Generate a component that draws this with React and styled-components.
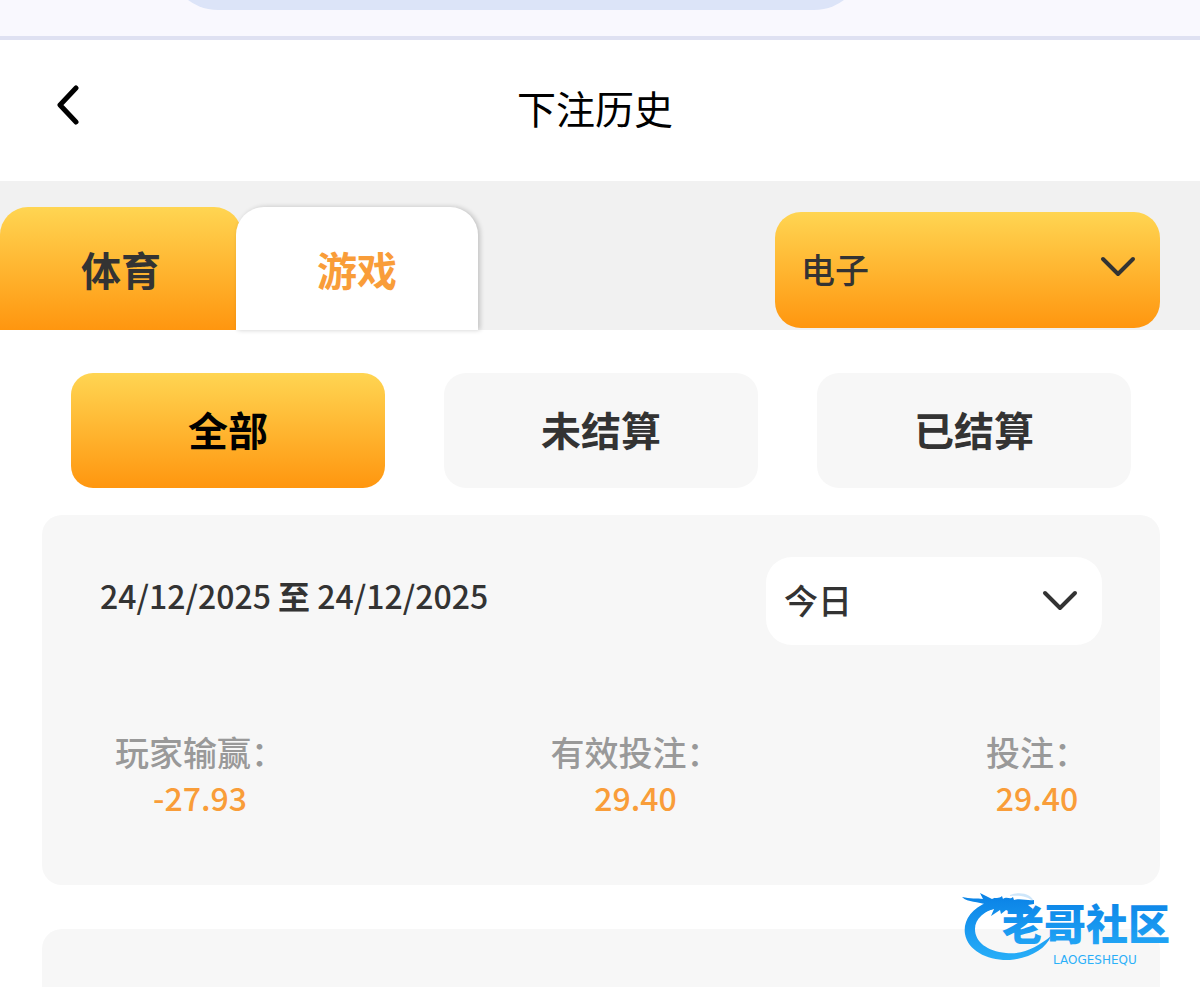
import React, { useState } from 'react'
import styled, { createGlobalStyle } from 'styled-components'


const filters = ['全部', '未结算', '已结算']

const stats = [
  { label: '玩家输赢：', value: '-27.93' },
  { label: '有效投注：', value: '29.40' },
  { label: '投注：', value: '29.40' },
]

const Chevron = () => (
  <ChevronIcon viewBox="0 0 36 22" aria-hidden="true">
    <path d="M3 3 L18 18 L33 3" />
  </ChevronIcon>
)

const BrandMark = () => (
  <Brand viewBox="0 0 224 80" role="img" aria-label="老哥社区 LAOGESHEQU">
    <defs>
      <linearGradient id="brandBlue" x1="0" y1="0" x2="0" y2="80" gradientUnits="userSpaceOnUse">
        <stop offset="0.1" stopColor="#0a82e6" />
        <stop offset="0.6" stopColor="#1c9df2" />
        <stop offset="1" stopColor="#2bb4fa" />
      </linearGradient>
    </defs>
    <g fill="url(#brandBlue)">
      <path d="M28 15 C10 22 3 35 5 47 C8 64 28 74 50 73 C70 71 86 62 91 49 C78 60 62 68 46 66 C27 64 15 55 15 42 C15 32 24 23 40 20 Z" />
      <path d="M2 10 C10 12 17 11 23 12 L20 6 L32 12 C35 10 39 12 42 9 L43 12 C47 9 50 13 53 10 L54 13 C60 11 68 14 74 13 L74 17 L68 18 L73 22 L72 25 L63 22 L60 24 L52 22 L55 27 L46 23 L41 27 L40 23 L31 29 L34 22 L24 25 L27 18 C18 14 8 16 2 10 Z" />
      <path d="M50 8 C60 4 72 7 74 15 C68 9 59 8 50 9 Z" opacity="0.2" />
      <BrandName x="42" y="53">老哥社区</BrandName>
      <BrandLatin x="93" y="77">LAOGESHEQU</BrandLatin>
    </g>
  </Brand>
)

const App = () => {
  const [active, setActive] = useState('全部')

  return (
    <Page>
      <GlobalStyle />
      <BrowserBar>
        <AddressPill />
      </BrowserBar>

      <Header>
        <BackButton type="button" aria-label="返回">
          <BackIcon viewBox="0 0 24 42" aria-hidden="true">
            <path d="M20 3 L4 20 L20 37" />
          </BackIcon>
        </BackButton>
        <Title>下注历史</Title>
      </Header>

      <TabBar>
        <Tab type="button">体育</Tab>
        <Tab type="button" $selected>游戏</Tab>
        <CategoryBox>
          <CategorySelect aria-label="游戏类别" defaultValue="电子">
            <option>电子</option>
          </CategorySelect>
          <Chevron />
        </CategoryBox>
      </TabBar>

      <Filters>
        {filters.map((name) => (
          <FilterButton
            key={name}
            type="button"
            $active={name === active}
            onClick={() => setActive(name)}
          >
            {name}
          </FilterButton>
        ))}
      </Filters>

      <Cards>
        <Card>
          <DateRow>
            <DateRange>24/12/2025 <b>至</b> 24/12/2025</DateRange>
            <PeriodBox>
              <PeriodSelect aria-label="日期" defaultValue="今日">
                <option>今日</option>
              </PeriodSelect>
              <Chevron />
            </PeriodBox>
          </DateRow>
          <Stats>
            {stats.map((item) => (
              <Stat key={item.label}>
                <dt>{item.label}</dt>
                <dd>{item.value}</dd>
              </Stat>
            ))}
          </Stats>
        </Card>
        <NextCard />
      </Cards>

      <BrandMark />
    </Page>
  )
}

export default App;

const GlobalStyle = createGlobalStyle`
    * {
        box-sizing: border-box;
    }

    body {
        margin: 0;
        background: #fff;
        color: #333;
        font-family: "Noto Sans CJK SC", sans-serif;
    }

    button, select {
        font-family: inherit;
        color: inherit;
        border: 0;
        margin: 0;
        cursor: pointer;
    }
`
const Page = styled.div`
    position: relative;
    display: flex;
    flex-direction: column;
    min-height: 100vh;
`
const BrowserBar = styled.div`
    flex: none;
    display: flex;
    align-items: flex-end;
    height: 40px;
    padding-bottom: 26px;
    background: #f9f8fe;
    border-bottom: 4px solid #dfe1f2;
    overflow: hidden;
`
const AddressPill = styled.div`
    width: 58%;
    height: 100px;
    margin-left: 14%;
    background: #dce4f8;
    border-radius: 50px;
`
const Header = styled.header`
    flex: none;
    display: grid;
    grid-template-columns: 1fr auto 1fr;
    align-items: center;
    height: 141px;
    padding: 0 56px;
`
const BackButton = styled.button`
    display: flex;
    justify-self: start;
    padding: 0;
    background: none;
`
const BackIcon = styled.svg`
    width: 24px;
    height: 42px;
    margin-bottom: 10px;
    fill: none;
    stroke: #000;
    stroke-width: 5;
    stroke-linecap: round;
    stroke-linejoin: round;
`
const Title = styled.h1`
    margin: 0 10px 8px 0;
    color: #000;
    font-size: 39px;
    font-weight: 400;
    line-height: 56px;
`
const TabBar = styled.nav`
    flex: none;
    display: flex;
    align-items: flex-end;
    height: 149px;
    padding-right: 40px;
    background: #f1f1f1;
`
const gold = 'linear-gradient(#ffd552, #ff960f)'

const Tab = styled.button`
    width: 242px;
    height: 123px;
    padding: 0;
    border-radius: 28px 28px 0 0;
    background: ${(props) => (props.$selected ? '#fff' : gold)};
    font-size: 40px;
    font-weight: 700;

    ${(props) => props.$selected && `
        z-index: 1;
        margin-left: -6px;
        color: #f99d39;
        box-shadow: 2px 0 5px rgba(0, 0, 0, 0.2);
    `}
`
const SelectBox = styled.div`
    display: grid;
    align-items: center;

    > * {
        grid-area: 1 / 1;
    }

    > svg {
        justify-self: end;
        margin-right: 24px;
        pointer-events: none;
    }
`
const CategoryBox = styled(SelectBox)`
    width: 385px;
    height: 116px;
    margin: 0 0 2px auto;

    > svg {
        margin-bottom: 6px;
    }
`
const BaseSelect = styled.select`
    appearance: none;
    width: 100%;
    height: 100%;
    font-size: 34px;
    font-weight: 500;
`
const CategorySelect = styled(BaseSelect)`
    padding: 0 26px 4px;
    border-radius: 26px;
    background: ${gold};
`
const ChevronIcon = styled.svg`
    width: 36px;
    height: 22px;
    fill: none;
    stroke: #333;
    stroke-width: 4;
    stroke-linecap: round;
    stroke-linejoin: round;
`
const Filters = styled.div`
    flex: none;
    display: flex;
    gap: 59px;
    padding: 43px 69px 27px 71px;
`
const FilterButton = styled.button`
    flex: 1;
    height: 115px;
    padding: 0 0 4px;
    border-radius: 22px;
    background: ${(props) => (props.$active ? gold : '#f7f7f7')};
    color: ${(props) => (props.$active ? '#000' : '#333')};
    font-size: 40px;
    font-weight: 700;
`
const Cards = styled.main`
    flex: 1;
    display: flex;
    flex-direction: column;
    gap: 44px;
    padding: 0 40px 0 42px;
`
const Card = styled.section`
    flex: none;
    padding: 42px 58px 66px;
    border-radius: 20px;
    background: #f7f7f7;
`
const NextCard = styled.section`
    flex: 1;
    border-radius: 20px 20px 0 0;
    background: #f7f7f7;
`
const DateRow = styled.div`
    display: flex;
    align-items: center;
    justify-content: space-between;
`
const DateRange = styled.p`
    margin: 0 0 12px;
    font-size: 32px;
    font-weight: 500;
    line-height: 48px;
`
const PeriodBox = styled(SelectBox)`
    width: 336px;
    height: 88px;
`
const PeriodSelect = styled(BaseSelect)`
    padding: 0 18px 4px;
    border-radius: 26px;
    background: #fff;
`
const Stats = styled.dl`
    display: flex;
    justify-content: space-between;
    margin: 84px 14px 0 15px;
`
const Stat = styled.div`
    display: flex;
    flex-direction: column;
    align-items: center;

    dt {
        color: #999;
        font-size: 34px;
        font-weight: 500;
        line-height: 46px;
    }

    dd {
        margin: 0;
        color: #f99d39;
        font-size: 32px;
        font-weight: 500;
        line-height: 44px;
    }
`
const Brand = styled.svg`
    position: absolute;
    right: 16px;
    bottom: 20px;
    width: 224px;
    height: 80px;
`
const BrandName = styled.text`
    font-size: 42px;
    font-weight: 900;
`
const BrandLatin = styled.text`
    font-family: "DejaVu Sans", sans-serif;
    font-size: 12px;
`
